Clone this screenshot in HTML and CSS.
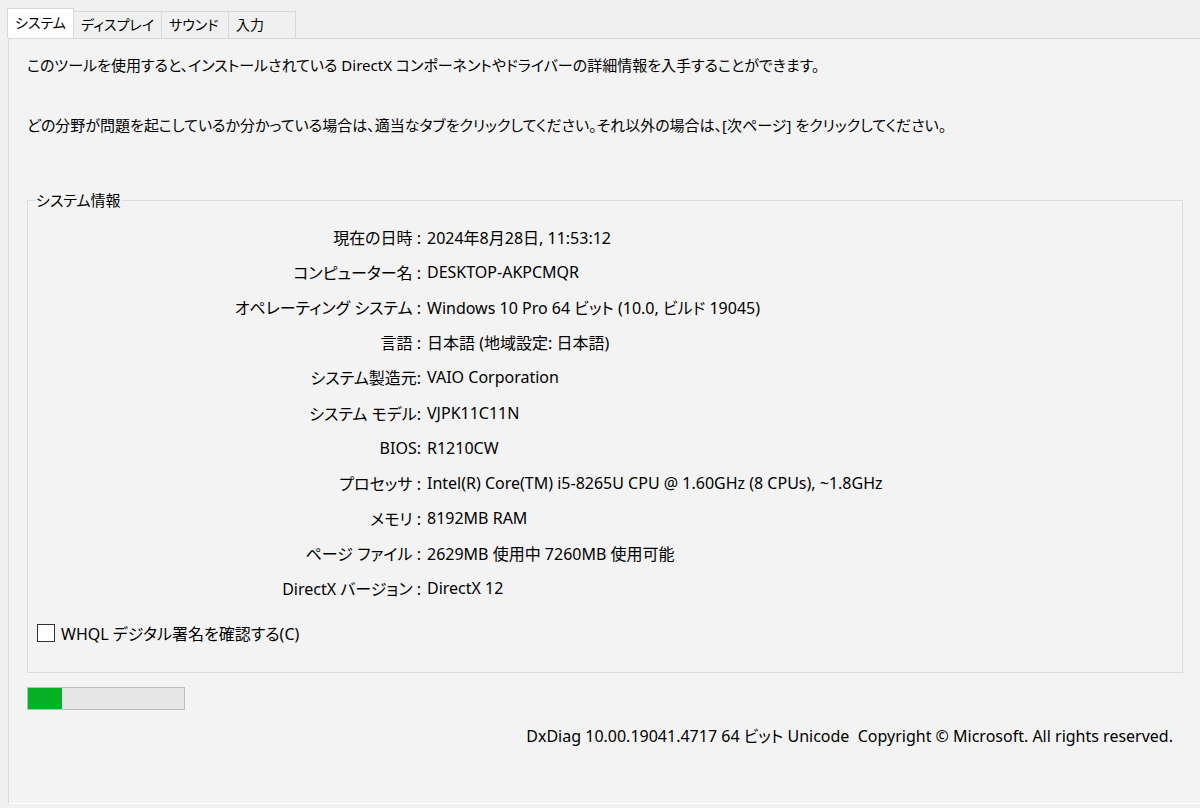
FILE: index.html
```html
<!DOCTYPE html>
<html lang="ja">
  <head>
    <meta charset="utf-8">
    <title>DirectX 診断ツール</title>
    <link rel="stylesheet" href="styles.css">
  </head>
  <body>
    <div class="tabs">
      <div class="tab active">システム</div>
      <div class="tab">ディスプレイ</div>
      <div class="tab">サウンド</div>
      <div class="tab">入力</div>
    </div>

    <div class="panel">
      <p class="intro">このツールを使用すると、インストールされている DirectX コンポーネントやドライバーの詳細情報を入手することができます。</p>
      <p class="intro second">どの分野が問題を起こしているか分かっている場合は、適当なタブをクリックしてください。それ以外の場合は、[次ページ] をクリックしてください。</p>

      <fieldset class="group">
        <legend>システム情報</legend>
        <div class="info">
          <div class="label">現在の日時 :</div><div class="value">2024年8月28日, 11:53:12</div>
          <div class="label">コンピューター名 :</div><div class="value">DESKTOP-AKPCMQR</div>
          <div class="label">オペレーティング システム :</div><div class="value">Windows 10 Pro 64 ビット (10.0, ビルド 19045)</div>
          <div class="label">言語 :</div><div class="value">日本語 (地域設定: 日本語)</div>
          <div class="label">システム製造元:</div><div class="value">VAIO Corporation</div>
          <div class="label">システム モデル:</div><div class="value">VJPK11C11N</div>
          <div class="label">BIOS:</div><div class="value">R1210CW</div>
          <div class="label">プロセッサ :</div><div class="value">Intel(R) Core(TM) i5-8265U CPU @ 1.60GHz (8 CPUs), ~1.8GHz</div>
          <div class="label">メモリ :</div><div class="value">8192MB RAM</div>
          <div class="label">ページ ファイル :</div><div class="value">2629MB 使用中 7260MB 使用可能</div>
          <div class="label">DirectX バージョン :</div><div class="value">DirectX 12</div>
        </div>
        <label class="check">
          <span class="box"></span>
          WHQL デジタル署名を確認する(C)
        </label>
      </fieldset>

      <div class="progress"><div class="fill" style="width: 34px"></div></div>

      <div class="footer">DxDiag 10.00.19041.4717 64 ビット Unicode&nbsp; Copyright © Microsoft. All rights reserved.</div>
    </div>
  </body>
</html>
```

FILE: styles.css
```css
/* Dialog base */
body {
  margin: 0;
  background-color: #f0f0f0;
  color: #000;
  font-family: "Noto Sans", "Noto Sans CJK JP", sans-serif;
  font-size: 16px;
  font-feature-settings: "palt";
  overflow: hidden;
}

/* Tab strip */
.tabs {
  display: flex;
  align-items: flex-end;
  height: 38px;
  padding-left: 7px;
  box-sizing: border-box;
}

.tab {
  min-width: 67px;
  height: 27px;
  line-height: 25px;
  padding: 0 7px;
  border: 1px solid #d9d9d9;
  border-bottom: none;
  border-left: none;
  box-sizing: border-box;
  background-color: #f0f0f0;
  font-size: 14px;
}

.tab.active {
  height: 30px;
  line-height: 28px;
  border-left: 1px solid #d9d9d9;
  background-color: #fff;
}

/* Tab page */
.panel {
  margin-left: 8px;
  height: 766px;
  border-top: 1px solid #d9d9d9;
  border-left: 1px solid #d9d9d9;
  border-bottom: 1px solid #fff;
  box-sizing: border-box;
  background-color: #f3f3f3;
  padding: 16px 0 0 18px;
}

.intro {
  margin: 0;
  line-height: 20px;
  font-size: 15px;
}

.intro.second {
  margin-top: 40px;
}

/* System info group */
.group {
  margin: 56px 0 0 0;
  width: 1156px;
  height: 482px;
  box-sizing: border-box;
  border: 1px solid #dcdcdc;
  padding: 0;
}

.group legend {
  margin-left: 7px;
  padding: 0 1px;
  line-height: 18px;
  font-size: 15px;
}

.info {
  display: grid;
  grid-template-columns: 393px auto;
  column-gap: 6px;
  grid-auto-rows: 35.2px;
  align-items: center;
  margin-top: 10px;
}

.label {
  text-align: right;
}

.check {
  display: flex;
  align-items: center;
  gap: 6px;
  margin: 15px 0 0 9px;
}

.box {
  width: 16px;
  height: 16px;
  border: 1px solid #333;
  background-color: #fff;
}

/* Progress bar */
.progress {
  width: 158px;
  height: 23px;
  margin-top: 14px;
  border: 1px solid #bcbcbc;
  box-sizing: border-box;
  background-color: #e6e6e6;
}

.fill {
  height: 100%;
  background-color: #06b025;
}

.footer {
  margin-top: 16px;
  width: 1146px;
  text-align: right;
  line-height: 20px;
}
```
